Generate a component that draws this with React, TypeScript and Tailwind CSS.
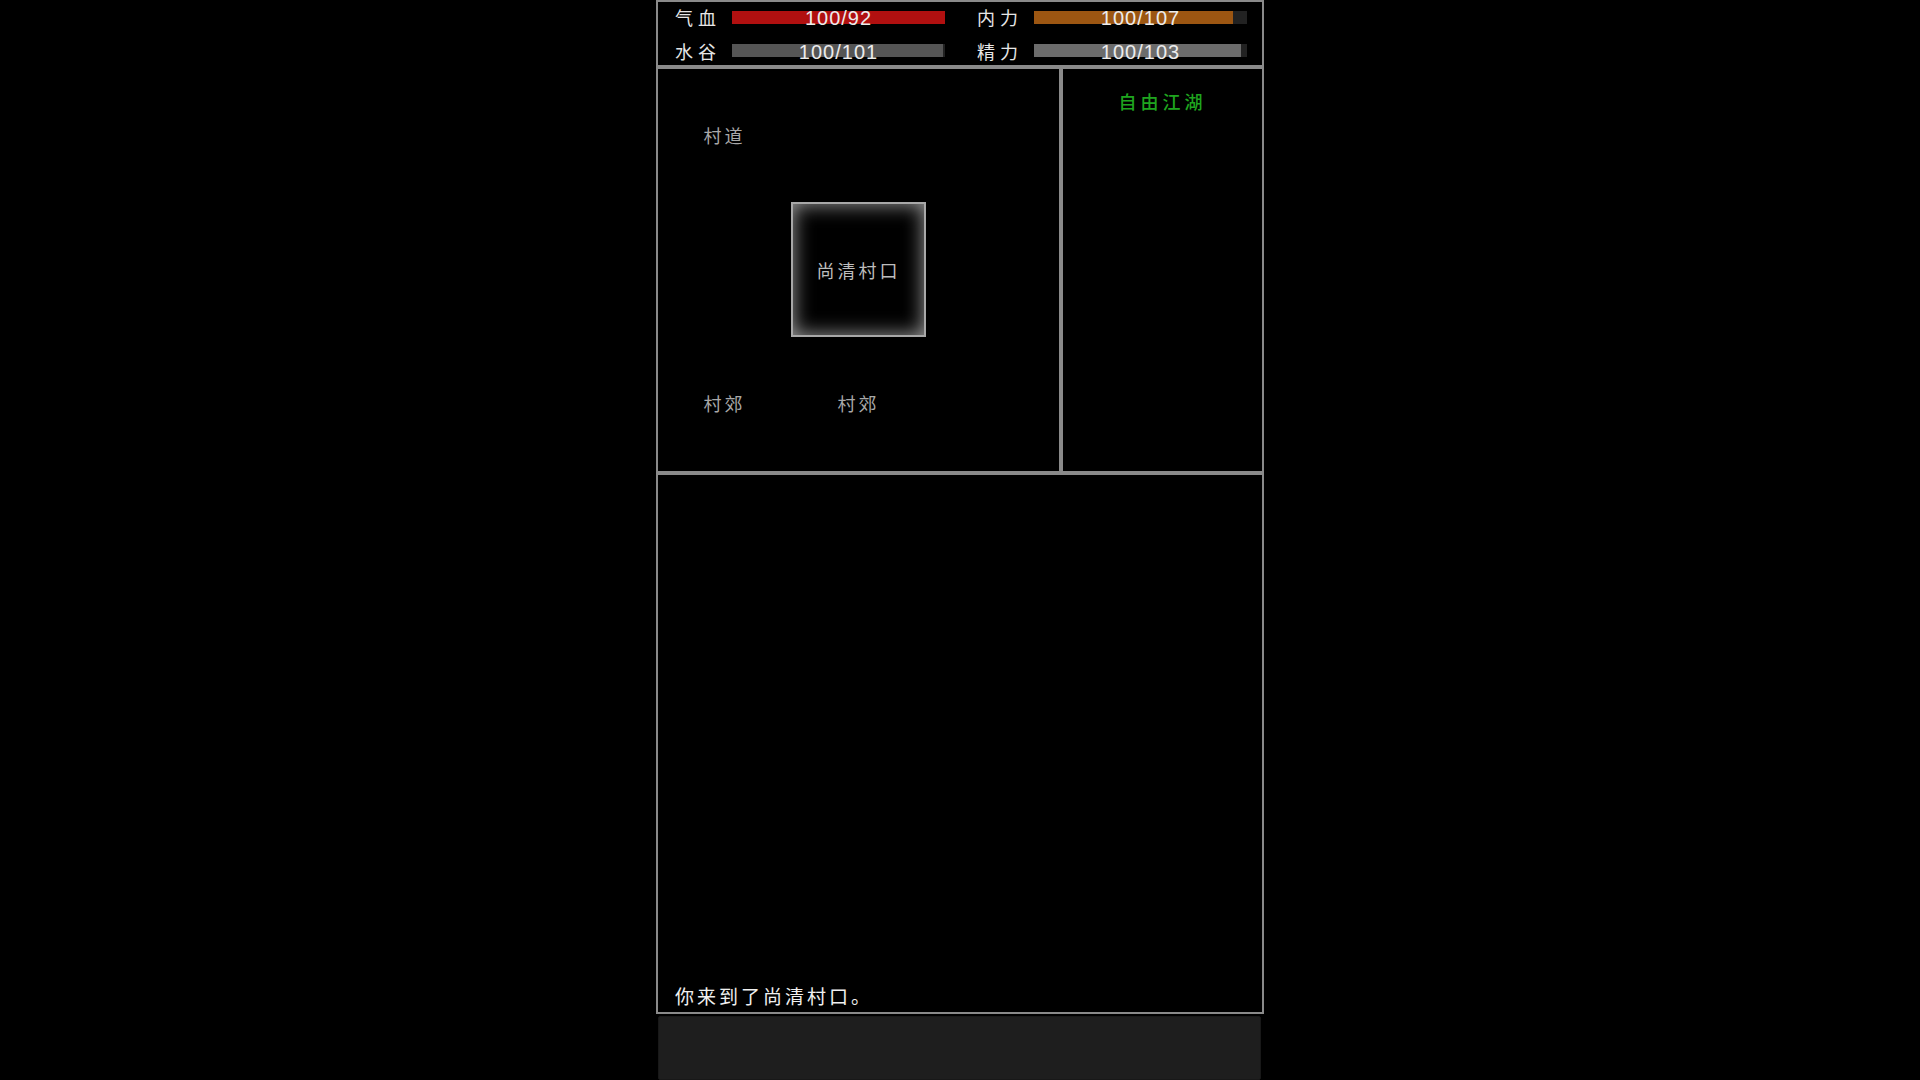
import React from "react";

const cjk = { fontFamily: '"Noto Sans CJK SC", "Noto Sans", sans-serif' };
const num = { fontFamily: '"Liberation Sans", "Noto Sans", sans-serif' };

type StatProps = { label: string; cur: number; max: number; fill: string };

function Stat({ label, cur, max, fill }: StatProps) {
  const pct = Math.min(100, (cur / max) * 100);
  return (
    <div className="flex items-center pl-[17px]">
      <div className="w-[57px] text-[18px] leading-[24px] tracking-[5px] text-[#e6e6e6]" style={cjk}>
        {label}
      </div>
      <div className="relative w-[213px] h-[13px] bg-[#222222]">
        <div className={`absolute left-0 top-0 h-full ${fill}`} style={{ width: `${pct}%` }} />
        <div
          className="absolute inset-0 flex items-center justify-center pt-[2px] text-[20px] tracking-[1px] leading-none text-[#ececec]"
          style={num}
        >
          {cur}/{max}
        </div>
      </div>
    </div>
  );
}

export default function App() {
  return (
    <div className="w-full h-screen bg-black overflow-hidden">
      <div className="mx-auto w-[608px] h-full flex flex-col">
        {/* stats */}
        <div className="h-[67px] border-2 border-[#8a8a8a] flex flex-col">
          <div className="h-[30px] grid grid-cols-2">
            <Stat label="气血" cur={100} max={92} fill="bg-[#b11010]" />
            <Stat label="内力" cur={100} max={107} fill="bg-[#9c5612]" />
          </div>
          <div className="mt-[4px] h-[29px] grid grid-cols-2">
            <Stat label="水谷" cur={100} max={101} fill="bg-[#555555]" />
            <Stat label="精力" cur={100} max={103} fill="bg-[#6c6c6c]" />
          </div>
        </div>

        {/* map + side */}
        <div className="flex h-[406px]">
          <div className="w-[405px] h-full border-2 border-[#8a8a8a]">
            <div
              className="grid grid-cols-[133px_135px_133px] grid-rows-[133px_135px_132px] text-[18px] leading-[24px] tracking-[3px] text-[#a8a8a8]"
              style={cjk}
            >
              <div className="flex items-center justify-center pb-[2px]">村道</div>
              <div />
              <div />
              <div />
              <div className="flex items-center justify-center border-2 border-[#a8a8a8] shadow-[inset_0_0_20px_rgba(190,190,190,0.85)] text-[#bdbdbd]">
                尚清村口
              </div>
              <div />
              <div className="flex items-center justify-center">村郊</div>
              <div className="flex items-center justify-center">村郊</div>
              <div />
            </div>
          </div>
          <div className="flex-1 h-full border-2 border-[#8a8a8a]">
            <div
              className="pt-[20px] text-center text-[18px] leading-[24px] tracking-[4px] font-medium text-[#1fa51f]"
              style={cjk}
            >
              自由江湖
            </div>
          </div>
        </div>

        {/* log */}
        <div className="h-[541px] border-2 border-[#8a8a8a] flex flex-col justify-end pl-[17px] pb-[4px]">
          <div className="text-[19px] leading-[24px] tracking-[3px] text-[#f0f0f0]" style={cjk}>
            你来到了尚清村口。
          </div>
        </div>

        {/* input bar */}
        <div className="mt-[2px] ml-[2px] mr-[3px] h-[64px] bg-[#1e1e1e] rounded-[2px] border border-[#181818]" />
      </div>
    </div>
  );
}
